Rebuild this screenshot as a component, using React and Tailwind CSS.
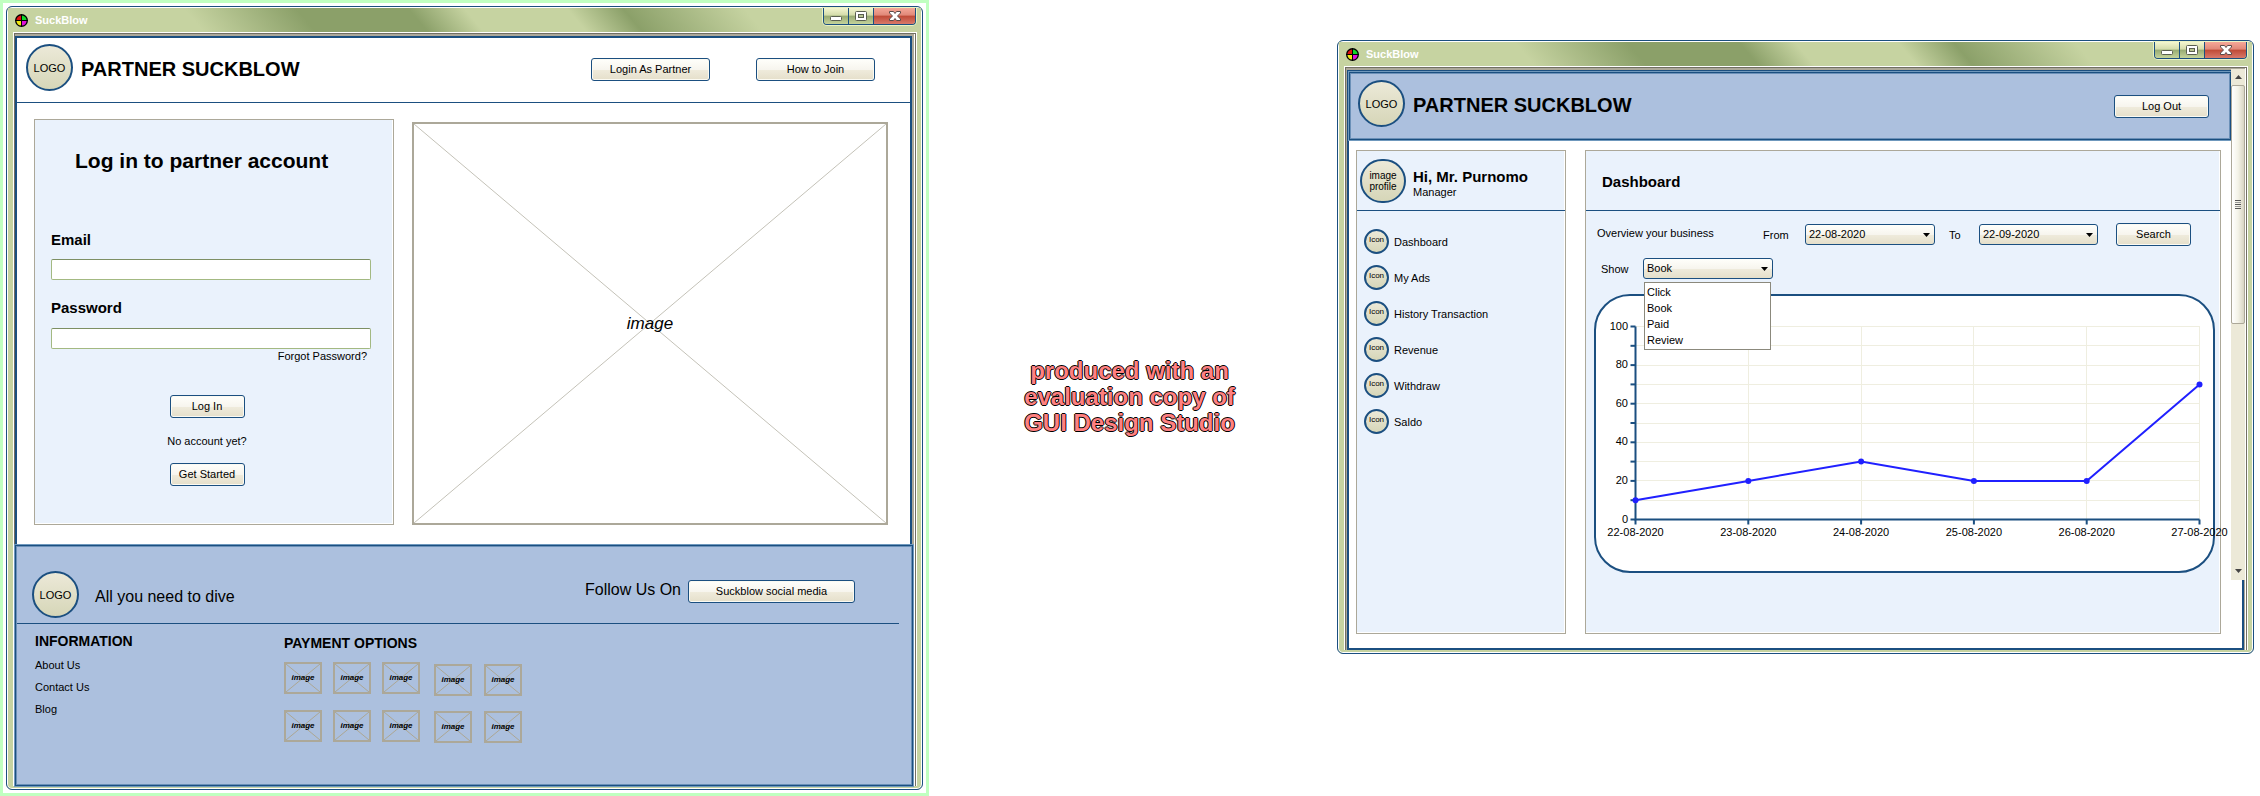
import React from "react";

const PAYMENT_ROWS = [0, 1];
const NAV = ["Dashboard", "My Ads", "History Transaction", "Revenue", "Withdraw", "Saldo"];
const SHOW_OPTIONS = ["Click", "Book", "Paid", "Review"];
const SERIES = [
  { date: "22-08-2020", value: 10 },
  { date: "23-08-2020", value: 20 },
  { date: "24-08-2020", value: 30 },
  { date: "25-08-2020", value: 20 },
  { date: "26-08-2020", value: 20 },
  { date: "27-08-2020", value: 70 },
];

function Button({ children, className = "" }) {
  return (
    <button
      type="button"
      className={`h-[23px] shrink-0 rounded-[3px] border border-[#1b4f80] bg-[linear-gradient(#fffffb,#f7f5ee_50%,#efebdc_52%,#e5dfca)] text-center leading-[21px] whitespace-nowrap shadow-[inset_0_0_0_1px_#fbfaf2] ${className}`}
    >
      {children}
    </button>
  );
}

function Select({ label, id, options, value, className = "", labelClass = "" }) {
  return (
    <>
      <label htmlFor={id} className={`shrink-0 ${labelClass}`}>{label}</label>
      <span className={`relative block shrink-0 ${className}`}>
        <select
          id={id}
          defaultValue={value}
          className="block h-[21px] w-full appearance-none rounded-[3px] border border-[#1b4f80] bg-[linear-gradient(#fffffb,#f7f5ee_50%,#efebdc_52%,#e5dfca)] pl-[3px] leading-[19px]"
        >
          {options.map((o) => (
            <option key={o}>{o}</option>
          ))}
        </select>
        <svg viewBox="0 0 7 4" className="pointer-events-none absolute top-[9px] right-[5px] h-1 w-[7px]" aria-hidden="true">
          <path d="M0 0h7L3.5 4z" fill="#000" />
        </svg>
      </span>
    </>
  );
}

function Disc({ children, className = "" }) {
  return (
    <span
      className={`flex shrink-0 items-center justify-center rounded-full border-2 border-[#1b4f80] bg-[linear-gradient(#ece9d8,#d6d6b8)] text-center ${className}`}
    >
      {children}
    </span>
  );
}

function Placeholder({ className = "", textClass = "", line }) {
  return (
    <div className={`relative flex items-center justify-center border-2 border-[#aca899] ${className}`}>
      <svg className="absolute inset-0 h-full w-full" viewBox="0 0 100 100" preserveAspectRatio="none" aria-hidden="true">
        <path d="M0 0L100 100M100 0L0 100" stroke={line} strokeWidth="1" vectorEffect="non-scaling-stroke" />
      </svg>
      <span className={`relative italic ${textClass}`}>image</span>
    </div>
  );
}

function Panel({ children, className = "" }) {
  return (
    <section className={`border border-[#aca899] bg-[#eaf2fc] shadow-[inset_-1px_-1px_0_#fff] ${className}`}>
      {children}
    </section>
  );
}

function TitleBar() {
  return (
    <div className="mx-px mt-px flex h-6 items-center bg-[linear-gradient(50deg,#c6d3a1_21%,#8ba069_33%,#8ba069_45%,#c6d3a1_51%,#c6d3a1_62%,#8ba069_68%,#c6d3a1_81%)] pl-[7px]">
      <svg viewBox="0 0 13 13" className="size-[13px]" aria-hidden="true">
        <circle cx="6.5" cy="6.5" r="6.5" fill="#000" />
        <path d="M6 6H1.4A5.2 5.2 0 0 1 6 1.4z" fill="#e01010" />
        <path d="M7 6V1.4A5.2 5.2 0 0 1 11.6 6z" fill="#10d828" />
        <path d="M6 7v4.6A5.2 5.2 0 0 1 1.4 7z" fill="#f0e810" />
        <path d="M7 7h4.6A5.2 5.2 0 0 1 7 11.6z" fill="#e010d8" />
        <path d="M6.5 0v13M0 6.5h13" stroke="#000" />
      </svg>
      <h2 className="ml-[7px] font-bold text-white">SuckBlow</h2>
      <div className="mr-[5px] ml-auto flex h-[17px] self-start overflow-hidden rounded-b border border-t-0 border-[#1b4f80] shadow-[0_0_0_1px_#eaf3c4]">
        <button type="button" aria-label="Minimize" className="flex w-6 items-end justify-center bg-[linear-gradient(#f4f6cf,#d3dcaa_45%,#98ab72_50%,#c5d39b)] pb-[3px]">
          <svg viewBox="0 0 12 5" className="h-[5px] w-3"><rect x=".5" y=".5" width="11" height="4" rx="1" fill="#fff" stroke="#5a5f50" /></svg>
        </button>
        <button type="button" aria-label="Maximize" className="flex w-[25px] items-end justify-center border-l border-[#1b4f80] bg-[linear-gradient(#f4f6cf,#d3dcaa_45%,#98ab72_50%,#c5d39b)] pb-[3px]">
          <svg viewBox="0 0 12 10" className="h-[10px] w-3">
            <rect x=".5" y=".5" width="11" height="9" rx="1" fill="#fff" stroke="#5a5f50" />
            <rect x="3.5" y="3.5" width="5" height="3" fill="#b9c693" stroke="#5a5f50" />
          </svg>
        </button>
        <button type="button" aria-label="Close" className="flex w-[42px] items-end justify-center border-l border-[#1b4f80] bg-[linear-gradient(#f5a898,#e08878_45%,#bf4a36_50%,#d8796a)] pb-[3px]">
          <svg viewBox="0 0 12 10" className="h-[10px] w-3">
            <path d="M.5.5H4.500L6 2.500 7.500.5h4V2L8.500 5l3 3v1.500h-4L6 7.500 4.500 9.500H.5V8l3-3-3-3z" fill="#fff" stroke="#5a4a48" />
          </svg>
        </button>
      </div>
    </div>
  );
}

function Window({ children, insetClass, scrollbar, className = "" }) {
  return (
    <div className={`rounded-md border border-[#1b4f80] bg-[#c6d3a1] pb-[3px] shadow-[inset_0_0_0_1px_#fff] ${className}`}>
      <TitleBar />
      <div className="mr-[5px] ml-[6px] border border-b-0 border-white">
        <div className="border border-b-0 border-[#716f64]">
          <div className={`relative border-r border-white bg-[#aca899] pt-[2px] ${insetClass}`}>
            {children}
            {scrollbar}
          </div>
        </div>
      </div>
    </div>
  );
}

function Scrollbar() {
  return (
    <div className="absolute top-px right-0 bottom-[70px] flex w-[14px] flex-col bg-[#ece9d8]" role="scrollbar" aria-controls="partner-view" aria-valuenow={0}>
      <span className="flex h-4 shrink-0 items-center justify-center">
        <svg viewBox="0 0 7 4" className="h-1 w-[7px]"><path d="M0 4h7L3.500 0z" fill="#444" /></svg>
      </span>
      <span className="flex h-[239px] shrink-0 flex-col items-center justify-center gap-px rounded-[2px] border border-[#aca899] bg-[linear-gradient(90deg,#fff,#f4f3e8_50%,#d8d5c4)]">
        <i className="h-px w-[6px] bg-[#555]" />
        <i className="h-px w-[6px] bg-[#999]" />
        <i className="h-px w-[6px] bg-[#555]" />
        <i className="h-px w-[6px] bg-[#999]" />
        <i className="h-px w-[6px] bg-[#555]" />
      </span>
      <span className="mt-auto flex h-[18px] items-center justify-center">
        <svg viewBox="0 0 7 4" className="h-1 w-[7px]"><path d="M0 0h7L3.500 4z" fill="#444" /></svg>
      </span>
    </div>
  );
}

function Chart() {
  const left = 39.5;
  const right = 603.5;
  const top = 30.5;
  const bottom = 223.5;
  const px = (i) => left + (i * (right - left)) / 5;
  const py = (v) => bottom - (v * (bottom - top)) / 100;
  const ticks = [0, 10, 20, 30, 40, 50, 60, 70, 80, 90, 100];
  return (
    <svg viewBox="0 0 617 275" className="block w-full overflow-visible" role="img" aria-label="Bookings per day">
      <g stroke="#efeee0" strokeWidth="1" shapeRendering="crispEdges">
        {ticks.slice(1).map((v) => (
          <line key={v} x1={left} x2={right} y1={py(v)} y2={py(v)} />
        ))}
        {SERIES.slice(1).map((p, i) => (
          <line key={p.date} x1={px(i + 1)} x2={px(i + 1)} y1={top} y2={bottom} />
        ))}
      </g>
      <g stroke="#1b4f80" strokeWidth="2">
        <path d={`M${left} ${top}V${bottom}H${right}`} fill="none" />
        {ticks.map((v) => (
          <line key={v} x1={left - 5} x2={left} y1={py(v)} y2={py(v)} />
        ))}
        {SERIES.map((p, i) => (
          <line key={p.date} x1={px(i)} x2={px(i)} y1={bottom} y2={bottom + 5} />
        ))}
      </g>
      <polyline points={SERIES.map((p, i) => `${px(i)},${py(p.value)}`).join(" ")} fill="none" stroke="#2020ff" strokeWidth="2" />
      {SERIES.map((p, i) => (
        <circle key={p.date} cx={px(i)} cy={py(p.value)} r="3" fill="#2020ff" />
      ))}
      <g fontSize="11">
        {[0, 20, 40, 60, 80, 100].map((v) => (
          <text key={v} x={32} y={py(v) + 3} textAnchor="end">{v}</text>
        ))}
        {SERIES.map((p, i) => (
          <text key={p.date} x={px(i)} y={240} textAnchor="middle">{p.date}</text>
        ))}
      </g>
    </svg>
  );
}

function Brand() {
  return (
    <>
      <Disc className="size-[47px]">LOGO</Disc>
      <h1 className="mt-[2px] ml-2 text-[20px] leading-7 font-bold whitespace-nowrap">PARTNER SUCKBLOW</h1>
    </>
  );
}

function LoginWindow() {
  return (
    <Window insetClass="pr-[2px]">
      <div className="border-2 border-b-0 border-[#1b4f80] bg-white">
        <header className="flex items-center border-b border-[#1b4f80] pt-[6px] pr-[35px] pb-[11px] pl-[9px]">
          <Brand />
          <nav className="mt-1 ml-auto flex gap-[46px]">
            <Button className="w-[119px]">Login As Partner</Button>
            <Button className="w-[119px]">How to Join</Button>
          </nav>
        </header>

        <main className="grid grid-cols-[360fr_476fr] gap-[18px] pt-4 pr-[22px] pb-5 pl-[17px]">
          <Panel className="pt-[27px] pr-[22px] pb-[38px] pl-4">
            <h2 className="pl-6 text-[21px] leading-7 font-bold whitespace-nowrap">Log in to partner account</h2>
            <form className="flex flex-col" onSubmit={(e) => e.preventDefault()}>
              <label htmlFor="email" className="mt-[55px] text-[15px] leading-5 font-bold">Email</label>
              <input id="email" type="email" className="mt-[9px] h-[21px] rounded-[2px] border border-[#a3b982] border-t-[#7d8f63] bg-white px-1" />
              <label htmlFor="password" className="mt-[18px] text-[15px] leading-5 font-bold">Password</label>
              <input id="password" type="password" className="mt-[10px] h-[21px] rounded-[2px] border border-[#a3b982] border-t-[#7d8f63] bg-white px-1" />
              <a href="#forgot" className="mr-1 self-end">Forgot Password?</a>
              <div className="mt-8 flex flex-col items-center pr-2">
                <Button className="w-[75px]">Log In</Button>
                <p className="mt-4 mb-[15px]">No account yet?</p>
                <Button className="w-[75px]">Get Started</Button>
              </div>
            </form>
          </Panel>
          <Placeholder className="mt-[3px]" textClass="text-[17px]" line="#c4c2b8" />
        </main>

        <footer className="relative -mr-[3px] -ml-[2px] border border-[#1b4f80] bg-[#acc0de] shadow-[0_0_0_1px_#6f98bd,inset_0_0_0_1px_#6b90b8]">
          <div className="flex items-center pt-[25px] pr-[57px] pb-[5px] pl-4">
            <Disc className="size-[47px]">LOGO</Disc>
            <p className="mt-1 ml-4 text-[16px] leading-6">All you need to dive</p>
            <div className="mb-[6px] ml-auto flex items-center gap-[7px]">
              <span className="mb-1 text-[16px] leading-6">Follow Us On</span>
              <Button className="w-[167px]">Suckblow social media</Button>
            </div>
          </div>
          <div className="mr-[13px] ml-px border-t border-[#1b4f80]" />
          <div className="grid grid-cols-[249fr_628fr] pt-[7px] pb-[42px] pl-[19px]">
            <nav>
              <h3 className="mb-[3px] text-[14px] leading-5 font-bold">INFORMATION</h3>
              <a href="#about" className="block leading-[22px]">About Us</a>
              <a href="#contact" className="block leading-[22px]">Contact Us</a>
              <a href="#blog" className="block leading-[22px]">Blog</a>
            </nav>
            <div className="pt-[2px]">
              <h3 className="text-[14px] leading-5 font-bold">PAYMENT OPTIONS</h3>
              <div className="mt-[9px] flex gap-[14px]">
                <div className="grid grid-cols-[repeat(3,38px)] gap-x-[11px] gap-y-[15px]">
                  {PAYMENT_ROWS.flatMap((r) => [0, 1, 2].map((c) => (
                    <Placeholder key={`${r}-${c}`} className="h-8" textClass="text-[8px] font-bold" line="#aca694" />
                  )))}
                </div>
                <div className="mt-[2px] grid grid-cols-[repeat(2,38px)] gap-x-3 gap-y-[15px]">
                  {PAYMENT_ROWS.flatMap((r) => [3, 4].map((c) => (
                    <Placeholder key={`${r}-${c}`} className="h-8" textClass="text-[8px] font-bold" line="#aca694" />
                  )))}
                </div>
              </div>
            </div>
          </div>
        </footer>
      </div>
    </Window>
  );
}

function DashboardWindow() {
  return (
    <Window insetClass="pl-px pr-px" scrollbar={<Scrollbar />} className="mt-10">
      <div id="partner-view" className="border-2 border-[#1b4f80] bg-white">
        <header className="relative mr-[11px] flex items-center border border-[#1b4f80] bg-[#acc0de] pt-[7px] pr-[21px] pb-3 pl-2 shadow-[0_0_0_1px_#6f98bd,inset_0_0_0_1px_#6b90b8]">
          <Brand />
          <Button className="mt-[6px] ml-auto w-[95px]">Log Out</Button>
        </header>

        <main className="grid grid-cols-[210fr_636fr] gap-[19px] pt-[10px] pr-[21px] pb-[14px] pl-[7px]">
          <Panel>
            <div className="flex h-[60px] items-start border-b border-[#1b4f80] pt-2 pl-[3px]">
              <Disc className="h-[44px] w-[46px] text-[10px] leading-[11px]">
                image
                <br />
                profile
              </Disc>
              <div className="mt-[10px] ml-[7px]">
                <h2 className="text-[15px] leading-4 font-bold whitespace-nowrap">Hi, Mr. Purnomo</h2>
                <p>Manager</p>
              </div>
            </div>
            <nav className="flex flex-col gap-[11px] pt-[18px] pl-[7px]">
              {NAV.map((n) => (
                <a key={n} href={`#${n}`} className="flex items-center gap-[5px]">
                  <Disc className="size-[25px] pb-[3px] text-[8px]">Icon</Disc>
                  {n}
                </a>
              ))}
            </nav>
          </Panel>

          <Panel className="pb-[60px]">
            <h2 className="h-[60px] border-b border-[#1b4f80] pl-4 text-[15px] leading-[61px] font-bold">Dashboard</h2>
            <div className="flex items-center pt-3 pl-[11px]">
              <span className="mb-1 w-[166px] shrink-0 whitespace-nowrap">Overview your business</span>
              <Select id="from" label="From" labelClass="w-[42px]" className="w-[130px]" value="22-08-2020" options={["22-08-2020"]} />
              <Select id="to" label="To" labelClass="ml-[14px] w-[30px]" className="w-[119px]" value="22-09-2020" options={["22-09-2020"]} />
              <Button className="ml-[18px] w-[75px]">Search</Button>
            </div>
            <div className="mt-3 flex items-center pl-[15px]">
              <Select id="show" label="Show" labelClass="w-[42px]" className="w-[130px]" value="Book" options={SHOW_OPTIONS} />
              <div className="relative h-[21px]">
                <ul className="absolute top-6 right-[2px] z-10 w-[127px] border border-[#8b897c] bg-white py-px pl-[2px] leading-4">
                  {SHOW_OPTIONS.map((o) => (
                    <li key={o}>{o}</li>
                  ))}
                </ul>
              </div>
            </div>
            <div className="mt-[15px] mr-[5px] ml-2 rounded-[36px] border-2 border-[#1b4f80] bg-white">
              <Chart />
            </div>
          </Panel>
        </main>
      </div>
    </Window>
  );
}

export default function App() {
  return (
    <div className="grid grid-cols-[929fr_408fr_917fr] items-start bg-white pr-[6px] font-['Liberation_Sans',Arial,sans-serif] text-[11px] leading-[14px] text-black">
      <div className="border-[3px] border-[#c0ffc0] bg-white p-[3px]">
        <LoginWindow />
      </div>
      <p className="self-center pr-[7px] pb-[2px] text-center text-[24px] leading-[26px] font-bold whitespace-nowrap text-[#ff8080] [text-shadow:1px_0_#000,-1px_0_#000,0_1px_#000,0_-1px_#000]">
        produced with an
        <br />
        evaluation copy of
        <br />
        GUI Design Studio
      </p>
      <DashboardWindow />
    </div>
  );
}
